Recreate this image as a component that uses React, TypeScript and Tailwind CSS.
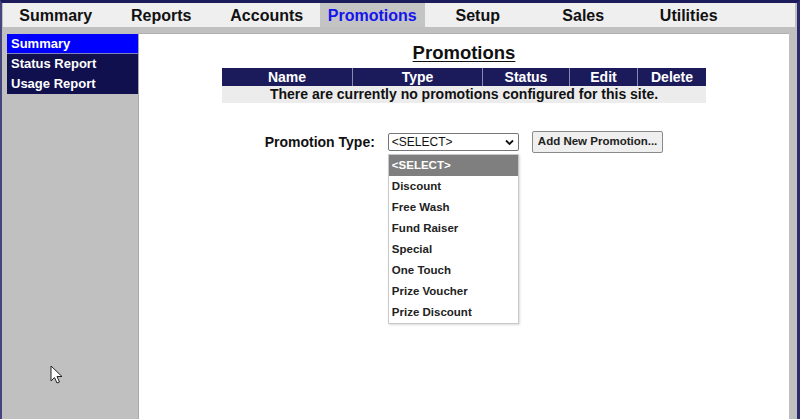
import React from "react";

const tabs = ["Summary", "Reports", "Accounts", "Promotions", "Setup", "Sales", "Utilities"];
const side = ["Summary", "Status Report", "Usage Report"];
const opts = ["Discount", "Free Wash", "Fund Raiser", "Special", "One Touch", "Prize Voucher", "Prize Discount"];
const cols = [
  { t: "Name", w: "w-[130px]" },
  { t: "Type", w: "w-[130px]" },
  { t: "Status", w: "w-[87px]" },
  { t: "Edit", w: "w-[68px]" },
  { t: "Delete", w: "w-[69px]" },
];

export default function App() {
  return (
    <div className="relative w-[800px] h-[419px] overflow-hidden bg-[#c0c0c0] border-t-[3px] border-t-[#1c1c5c] border-l-2 border-l-[#44447e] border-r-[3px] border-r-[#2c2c6c] flex flex-col font-['Liberation_Sans',Arial,sans-serif]">
      {/* tab bar */}
      <div className="ml-[1px] mr-[2px] h-[24px] bg-[#efefef] flex shrink-0">
        {tabs.map((t) => (
          <div
            key={t}
            className={
              "w-[105.5px] h-full flex items-center justify-center pt-[1px] text-[16px] font-bold " +
              (t === "Promotions" ? "bg-[#c4c4c4] text-[#1414ee]" : "text-[#111]")
            }
          >
            {t}
          </div>
        ))}
      </div>
      <div className="h-[6px] shrink-0" />
      <div className="flex flex-1 min-h-0">
        {/* sidebar */}
        <div className="w-[137px] shrink-0 pl-[5px] pt-[1px] border-r border-r-[#a9a9a9]">
          {side.map((s) => (
            <div
              key={s}
              className={
                "h-[20px] flex items-center pl-[4px] text-[13px] font-bold text-white " +
                (s === "Summary" ? "bg-[#0000ff] border-b border-b-[#8080c0]" : "bg-[#10104e]")
              }
            >
              {s}
            </div>
          ))}
        </div>
        {/* main */}
        <div className="w-[650px] shrink-0 bg-white border-t border-[#b0b0b0] flex flex-col items-center pt-[8px]">
          <div className="text-[18.5px] leading-[21px] font-bold underline underline-offset-[2px] text-[#111]">Promotions</div>
          <div className="mt-[5px] w-[484px]">
            <div className="flex h-[18px] bg-[#1b1b5b]">
              {cols.map((c, i) => (
                <div
                  key={c.t}
                  className={
                    c.w +
                    " flex items-center justify-center text-[14px] font-bold text-white " +
                    (i > 0 ? "border-l border-l-[#8a8ab0]" : "")
                  }
                >
                  {c.t}
                </div>
              ))}
            </div>
            <div className="h-[17px] bg-[#ececec] flex items-center justify-center text-[14px] font-bold text-[#111]">
              There are currently no promotions configured for this site.
            </div>
          </div>
          <div className="mt-[28px] flex items-center gap-[13px]">
            <div className="text-[14px] font-bold text-[#111]">Promotion Type:</div>
            <div className="relative w-[131px] h-[18px] border border-[#767676] rounded-[2px] bg-white flex items-center pl-[3px] text-[12px] text-[#111]">
              &lt;SELECT&gt;
              <svg className="absolute right-[4px] top-[5px]" width="9" height="7" viewBox="0 0 9 7">
                <path d="M1 1.5 L4.5 5 L8 1.5" fill="none" stroke="#111" strokeWidth="1.8" />
              </svg>
              <div className="absolute left-[-1px] top-[20px] w-[131px] bg-white border border-[#c8c8c8] shadow-[1px_1px_2px_rgba(0,0,0,0.15)]">
                <div className="h-[21px] flex items-center pl-[3px] bg-[#7f7f7f] text-white text-[11.5px] font-bold">&lt;SELECT&gt;</div>
                {opts.map((o) => (
                  <div key={o} className="h-[21px] flex items-center pl-[3px] text-[11.5px] font-bold text-[#222]">
                    {o}
                  </div>
                ))}
              </div>
            </div>
            <button className="h-[22px] px-[5px] bg-[#efefef] border border-[#8a8a8a] rounded-[2px] text-[11.5px] font-bold text-[#222]">
              Add New Promotion...
            </button>
          </div>
        </div>
        <div className="flex-1" />
      </div>
      {/* mouse cursor */}
      <svg className="absolute left-[48px] top-[362px]" width="14" height="20" viewBox="0 0 14 20">
        <path d="M1 1 L1 16 L4.5 12.5 L7 18 L9.5 17 L7 11.5 L12 11.5 Z" fill="#fff" stroke="#222" strokeWidth="1" strokeLinejoin="round" />
      </svg>
    </div>
  );
}
